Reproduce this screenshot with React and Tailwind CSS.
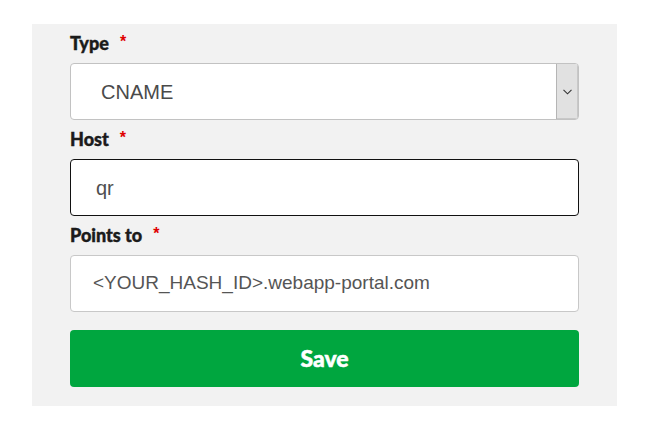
import React from "react";

function Label({ children }) {
  return (
    <div className="h-[30px] flex items-start text-[18px] leading-[20px] font-black text-[#1b1b1b] font-['Lato',sans-serif] [-webkit-text-stroke:0.4px_#1b1b1b]">
      <span>{children}</span>
      <span className="ml-[11px] mt-[1px] text-[#e00000] text-[16px] leading-[16px] font-bold font-['Liberation_Sans',sans-serif] [-webkit-text-stroke:0px]">*</span>
    </div>
  );
}

export default function App() {
  return (
    <div className="w-[651px] h-[430px] bg-white pt-[24px] pl-[32px]">
      <div className="w-[585px] h-[382px] bg-[#f2f2f2] px-[38px] pt-[9px] pb-[19px] flex flex-col">
        <Label>Type</Label>
        <div className="h-[57px] flex border border-[#c2c2c2] rounded-[4px] bg-white overflow-hidden">
          <div className="flex-1 flex items-center pl-[30px] text-[20px] text-[#4a4a4a] font-['Liberation_Sans',sans-serif]">
            CNAME
          </div>
          <div className="w-[22px] bg-[#e1e1e1] border-l border-[#b5b5b5] flex items-center justify-center shadow-[inset_-1px_-1px_0_#c8c8c8]">
            <svg width="9" height="6" viewBox="0 0 9 6" fill="none">
              <path d="M0.5 0.8 L4.5 4.8 L8.5 0.8" stroke="#333" strokeWidth="1.1" />
            </svg>
          </div>
        </div>
        <div className="h-[9px]" />
        <Label>Host</Label>
        <div className="h-[57px] flex items-center border border-[#111] rounded-[4px] bg-white pl-[25px] text-[20px] text-[#4f4f4f] font-['Liberation_Sans',sans-serif]">
          qr
        </div>
        <div className="h-[9px]" />
        <Label>Points to</Label>
        <div className="h-[57px] flex items-center border border-[#c8c8c8] rounded-[4px] bg-white pl-[22px] text-[19px] text-[#555555] font-['Liberation_Sans',sans-serif]">
          &lt;YOUR_HASH_ID&gt;.webapp-portal.com
        </div>
        <div className="h-[18px]" />
        <button className="h-[57px] w-full rounded-[4px] bg-[#00a63f] text-white text-[23px] font-black font-['Lato',sans-serif] [-webkit-text-stroke:0.5px_#ffffff] flex items-center justify-center">
          Save
        </button>
      </div>
    </div>
  );
}
